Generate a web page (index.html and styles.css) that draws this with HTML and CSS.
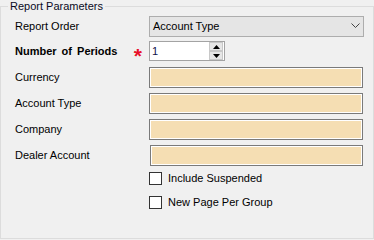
FILE: index.html
```html
<!DOCTYPE html>
<html>
<head>
<meta charset="utf-8">
<link rel="stylesheet" href="styles.css">
</head>
<body>
<div class="group">
  <div class="legend">Report Parameters</div>
  <div class="rows">
    <div class="row r-order">
      <div class="label">Report Order</div>
      <div class="combo">
        <span class="combo-text">Account Type</span>
        <svg class="chev" width="9" height="6" viewBox="0 0 9 6"><polyline points="0.5,0.5 4.5,4.5 8.5,0.5" fill="none" stroke="#444" stroke-width="1"/></svg>
      </div>
    </div>
    <div class="row r-num">
      <div class="label bold"><span>Number of Periods</span><span class="req">*</span></div>
      <div class="numeric">
        <span class="num-text">1</span>
        <div class="spin">
          <div class="spin-btn up"><svg width="7" height="4" viewBox="0 0 7 4"><polygon points="3.5,0 7,4 0,4" fill="#000"/></svg></div>
          <div class="spin-btn down"><svg width="7" height="4" viewBox="0 0 7 4"><polygon points="0,0 7,0 3.5,4" fill="#000"/></svg></div>
        </div>
      </div>
    </div>
    <div class="row r-field">
      <div class="label">Currency</div>
      <div class="field"></div>
    </div>
    <div class="row r-field">
      <div class="label">Account Type</div>
      <div class="field"></div>
    </div>
    <div class="row r-field">
      <div class="label">Company</div>
      <div class="field"></div>
    </div>
    <div class="row r-field">
      <div class="label">Dealer Account</div>
      <div class="field dealer"></div>
    </div>
    <div class="row r-check first">
      <div class="label"></div>
      <div class="check"><span class="box"></span><span>Include Suspended</span></div>
    </div>
    <div class="row r-check second">
      <div class="label"></div>
      <div class="check"><span class="box"></span><span>New Page Per Group</span></div>
    </div>
  </div>
</div>
</body>
</html>
```

FILE: styles.css
```css
html, body {
  margin: 0;
  padding: 0;
  background: #f0f0f0;
}
body {
  width: 374px;
  height: 240px;
  overflow: hidden;
  font-family: "Liberation Sans", Arial, sans-serif;
  font-size: 11px;
  line-height: 13px;
  color: #000;
}
.group {
  position: relative;
  box-sizing: border-box;
  margin-top: 6px;
  width: 374px;
  height: 233px;
  border: 1px solid #dcdcdc;
}
.legend {
  position: absolute;
  top: -7px;
  left: 7px;
  padding: 0 2px;
  background: #f0f0f0;
  color: #0a0a1e;
}
.rows {
  display: flex;
  flex-direction: column;
  padding: 9px 0 0 14px;
}
.row {
  display: flex;
  align-items: center;
}
.label {
  box-sizing: border-box;
  width: 134px;
  flex: none;
  display: flex;
  align-items: center;
  justify-content: space-between;
  padding-right: 8px;
}
.bold {
  font-weight: bold;
  word-spacing: 2px;
}
.req {
  color: #e8102a;
  font-size: 21px;
  line-height: 13px;
  height: 13px;
  padding-top: 4px;
  margin-right: -1px;
  box-sizing: border-box;
}
.combo {
  box-sizing: border-box;
  width: 215px;
  height: 21px;
  border: 1px solid #adadad;
  background: #e5e5e5;
  display: flex;
  align-items: center;
  justify-content: space-between;
  padding: 0 3px 1px 3px;
}
.chev {
  display: block;
}
.r-num {
  margin-top: 4px;
}
.numeric {
  box-sizing: border-box;
  width: 76px;
  height: 20px;
  border: 1px solid #a3a3a3;
  background: #fff;
  display: flex;
  justify-content: space-between;
  padding: 0 1px 0 2px;
}
.num-text {
  line-height: 18px;
  color: #10104a;
}
.spin {
  width: 14px;
  display: flex;
  flex-direction: column;
}
.spin-btn {
  flex: 1;
  box-sizing: border-box;
  background: #e6e6e6;
  border: 1px solid #c8c8c8;
  display: flex;
  align-items: center;
  justify-content: center;
}
.spin-btn svg {
  display: block;
}
.r-field {
  margin-top: 5px;
}
.r-num + .r-field {
  margin-top: 6px;
}
.field {
  box-sizing: border-box;
  width: 214px;
  height: 21px;
  border: 1px solid #7a7a7a;
  box-shadow: inset 0 0 0 1px #fff;
  background: #f5deb3;
}
.field.dealer {
  margin-left: 1px;
  width: 213px;
}
.r-check.first {
  margin-top: 6px;
}
.r-check.second {
  margin-top: 11px;
}
.check {
  display: flex;
  align-items: center;
  gap: 6px;
  height: 13px;
}
.box {
  box-sizing: border-box;
  width: 13px;
  height: 13px;
  border: 1px solid #333;
  background: #fff;
}
```
